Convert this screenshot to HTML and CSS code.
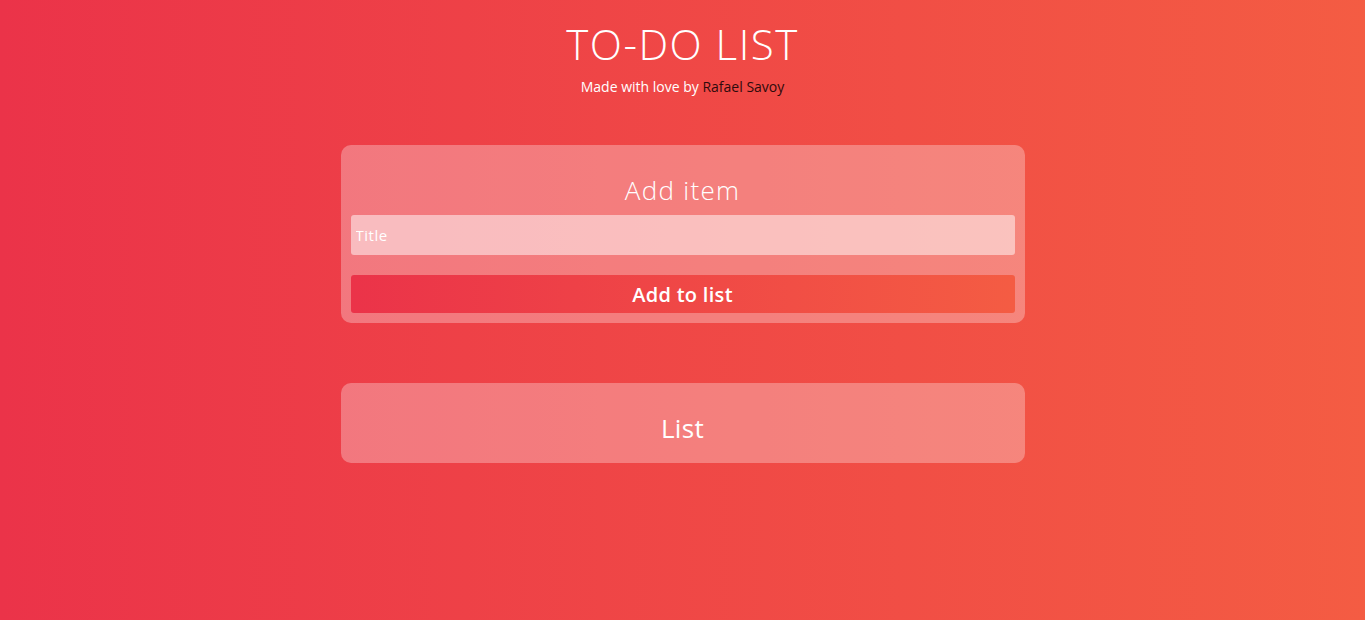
FILE: index.html
```html
<!DOCTYPE html>
<html lang="en">
<head>
<meta charset="utf-8">
<title>To-Do List</title>
<link rel="stylesheet" href="styles.css">
</head>
<body>
<header class="header">
  <h1 class="title">TO-DO LIST</h1>
  <p class="subtitle">Made with love by <a class="author" href="#">Rafael Savoy</a></p>
</header>
<main class="main">
  <section class="card">
    <h2 class="card-title">Add item</h2>
    <form class="add-form">
      <input class="input" type="text" placeholder="Title">
      <button class="button" type="button">Add to list</button>
    </form>
  </section>
  <section class="card card-list">
    <h2 class="card-title card-title-list">List</h2>
    <ul class="list"></ul>
  </section>
</main>
</body>
</html>
```
FILE: styles.css
```css
html, body {
  margin: 0;
  height: 100%;
}
body {
  background: linear-gradient(to right, #eb3349, #f45c43);
  font-family: "Open Sans", "Liberation Sans", sans-serif;
  color: #fff;
  min-height: 620px;
}
.header {
  text-align: center;
  padding-top: 19px;
}
.title {
  margin: 0;
  font-weight: 300;
  font-size: 42px;
  line-height: 50px;
  letter-spacing: 1.5px;
}
.subtitle {
  margin: 10px 0 0;
  font-size: 14px;
  line-height: 16px;
}
.author {
  color: #2e0a0c;
  text-decoration: none;
}
.main {
  width: 684px;
  margin: 50px auto 0;
}
.card {
  background: rgba(255, 255, 255, 0.3);
  border-radius: 10px;
  padding: 10px;
}
.card-list {
  margin-top: 60px;
}
.card-title {
  margin: 20px 0 10px;
  text-align: center;
  font-weight: 300;
  font-size: 26px;
  line-height: 30px;
  letter-spacing: 1.3px;
}
.card-title-list {
  font-weight: 400;
  letter-spacing: 0.3px;
}
.add-form {
  display: flex;
  flex-direction: column;
  gap: 20px;
}
.input {
  box-sizing: border-box;
  height: 40px;
  border: none;
  border-radius: 3px;
  background: rgba(255, 255, 255, 0.5);
  padding: 0 5px;
  font-family: inherit;
  font-size: 15px;
  letter-spacing: 0.5px;
  color: #fff;
  outline: none;
}
.input::placeholder {
  color: #fff;
}
.button {
  height: 38px;
  border: none;
  border-radius: 3px;
  background: linear-gradient(to right, #eb3349, #f45c43);
  color: #fff;
  font-family: inherit;
  font-weight: 600;
  font-size: 20px;
  letter-spacing: 0.3px;
  padding: 0;
}
.list {
  margin: 0;
  padding: 0;
  list-style: none;
}
```
